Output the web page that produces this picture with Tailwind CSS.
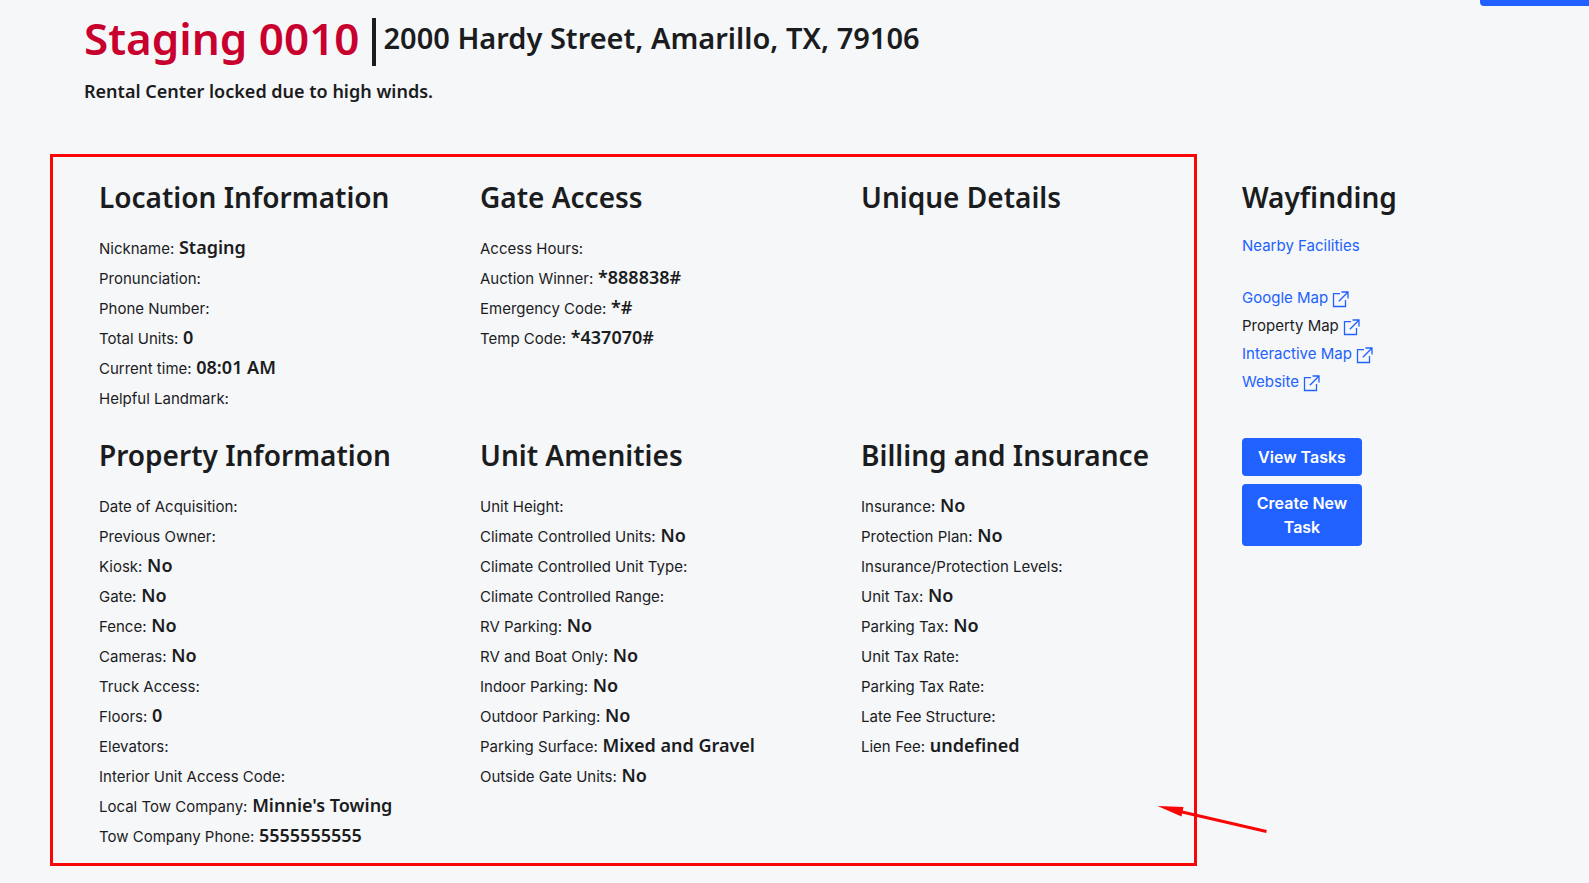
<!DOCTYPE html>
<html lang="en">
<head>
<meta charset="utf-8">
<meta name="viewport" content="width=device-width, initial-scale=1">
<title>Staging 0010</title>
<script src="https://cdn.jsdelivr.net/npm/@tailwindcss/browser@4"></script>
</head>
<body class="relative min-h-screen overflow-x-hidden bg-[#f6f7f9] font-['Inter',sans-serif] text-[15px] text-[#1b1c1e]">
<svg class="hidden" aria-hidden="true">
  <symbol id="external" viewBox="0 0 17 17">
    <path d="M8 2.6H1.5V15.5H13.5V9M9.5 1H16V7.5M15.8 1.2L6.8 10.2" fill="none" stroke="currentColor" stroke-width="1.3"/>
  </symbol>
</svg>

<button type="button" aria-label="Page action" class="absolute top-0 right-0 h-1.5 w-[109px] rounded-bl bg-[#2161ff]"></button>

<header class="pl-[84px] pt-[18px] font-['Noto_Sans',sans-serif] font-semibold">
  <div class="flex h-12 items-center">
    <h1 class="pb-2 text-[44px] leading-[48px] text-[#c8002d]">Staging 0010</h1>
    <span class="mr-2 ml-3 h-12 w-1 shrink-0 bg-[#1b1c1e]"></span>
    <h2 class="pb-2 text-[29px] leading-[44px]">2000 Hardy Street, Amarillo, TX, 79106</h2>
  </div>
  <p class="pt-3 text-[18px] leading-[26px]">Rental Center locked due to high winds.</p>
</header>

<main class="grid grid-cols-[381fr_381fr_381fr_347fr] pt-[74px] pl-[99px] [&_dl]:pt-4 [&_dl>div]:h-[30px] [&_dl>div]:font-['Noto_Sans',sans-serif] [&_dl>div]:text-[18px] [&_dl>div]:leading-[30px] [&_dt]:inline [&_dt]:font-['Inter',sans-serif] [&_dt]:text-[15px] [&_dd]:inline [&_dd]:font-semibold [&_h3]:font-['Noto_Sans',sans-serif] [&_h3]:text-[28px] [&_h3]:leading-[38px] [&_h3]:font-semibold">
  <section class="h-[258px]">
    <h3>Location Information</h3>
    <dl>
      <div><dt>Nickname:</dt> <dd>Staging</dd></div>
      <div><dt>Pronunciation:</dt></div>
      <div><dt>Phone Number:</dt></div>
      <div><dt>Total Units:</dt> <dd>0</dd></div>
      <div><dt>Current time:</dt> <dd>08:01 AM</dd></div>
      <div><dt>Helpful Landmark:</dt></div>
    </dl>
  </section>
  <section>
    <h3>Gate Access</h3>
    <dl>
      <div><dt>Access Hours:</dt></div>
      <div><dt>Auction Winner:</dt> <dd>*888838#</dd></div>
      <div><dt>Emergency Code:</dt> <dd>*#</dd></div>
      <div><dt>Temp Code:</dt> <dd>*437070#</dd></div>
    </dl>
  </section>
  <section>
    <h3>Unique Details</h3>
  </section>
  <aside class="row-span-2">
    <h3>Wayfinding</h3>
    <nav class="flex flex-col items-start pt-4 leading-7 text-[#2161ff]">
      <a href="#" class="mb-6">Nearby Facilities</a>
      <a href="#" class="flex items-center gap-1">Google Map <svg class="mt-0.5 size-[17px]"><use href="#external"/></svg></a>
      <a href="#" class="flex items-center gap-1"><span class="text-[#1b1c1e]">Property Map</span> <svg class="mt-0.5 size-[17px]"><use href="#external"/></svg></a>
      <a href="#" class="flex items-center gap-1">Interactive Map <svg class="mt-0.5 size-[17px]"><use href="#external"/></svg></a>
      <a href="#" class="flex items-center gap-1">Website <svg class="mt-0.5 size-[17px]"><use href="#external"/></svg></a>
    </nav>
    <div class="flex w-[120px] flex-col gap-2 pt-[42px] text-base leading-6 font-semibold text-white">
      <button type="button" class="rounded bg-[#2161ff] px-3 py-[7px]">View Tasks</button>
      <button type="button" class="rounded bg-[#2161ff] px-3 py-[7px]">Create New Task</button>
    </div>
  </aside>
  <section>
    <h3>Property Information</h3>
    <dl>
      <div><dt>Date of Acquisition:</dt></div>
      <div><dt>Previous Owner:</dt></div>
      <div><dt>Kiosk:</dt> <dd>No</dd></div>
      <div><dt>Gate:</dt> <dd>No</dd></div>
      <div><dt>Fence:</dt> <dd>No</dd></div>
      <div><dt>Cameras:</dt> <dd>No</dd></div>
      <div><dt>Truck Access:</dt></div>
      <div><dt>Floors:</dt> <dd>0</dd></div>
      <div><dt>Elevators:</dt></div>
      <div><dt>Interior Unit Access Code:</dt></div>
      <div><dt>Local Tow Company:</dt> <dd>Minnie's Towing</dd></div>
      <div><dt>Tow Company Phone:</dt> <dd>5555555555</dd></div>
    </dl>
  </section>
  <section>
    <h3>Unit Amenities</h3>
    <dl>
      <div><dt>Unit Height:</dt></div>
      <div><dt>Climate Controlled Units:</dt> <dd>No</dd></div>
      <div><dt>Climate Controlled Unit Type:</dt></div>
      <div><dt>Climate Controlled Range:</dt></div>
      <div><dt>RV Parking:</dt> <dd>No</dd></div>
      <div><dt>RV and Boat Only:</dt> <dd>No</dd></div>
      <div><dt>Indoor Parking:</dt> <dd>No</dd></div>
      <div><dt>Outdoor Parking:</dt> <dd>No</dd></div>
      <div><dt>Parking Surface:</dt> <dd>Mixed and Gravel</dd></div>
      <div><dt>Outside Gate Units:</dt> <dd>No</dd></div>
    </dl>
  </section>
  <section>
    <h3>Billing and Insurance</h3>
    <dl>
      <div><dt>Insurance:</dt> <dd>No</dd></div>
      <div><dt>Protection Plan:</dt> <dd>No</dd></div>
      <div><dt>Insurance/Protection Levels:</dt></div>
      <div><dt>Unit Tax:</dt> <dd>No</dd></div>
      <div><dt>Parking Tax:</dt> <dd>No</dd></div>
      <div><dt>Unit Tax Rate:</dt></div>
      <div><dt>Parking Tax Rate:</dt></div>
      <div><dt>Late Fee Structure:</dt></div>
      <div><dt>Lien Fee:</dt> <dd>undefined</dd></div>
    </dl>
  </section>
</main>

<!-- Red markup frame and arrow over the details grid -->
<div class="pointer-events-none absolute top-[154px] left-[50px] h-[712px] w-[1147px] border-3 border-[#f90606]"></div>
<svg class="pointer-events-none absolute top-[800px] left-[1150px] h-10 w-[124px]" viewBox="0 0 124 40" aria-hidden="true">
  <path d="M30 11.5L116.5 31.5" stroke="#f90606" stroke-width="3"/>
  <path d="M7.5 6L33.5 7L31.5 16.5Z" fill="#f90606"/>
</svg>
</body>
</html>
